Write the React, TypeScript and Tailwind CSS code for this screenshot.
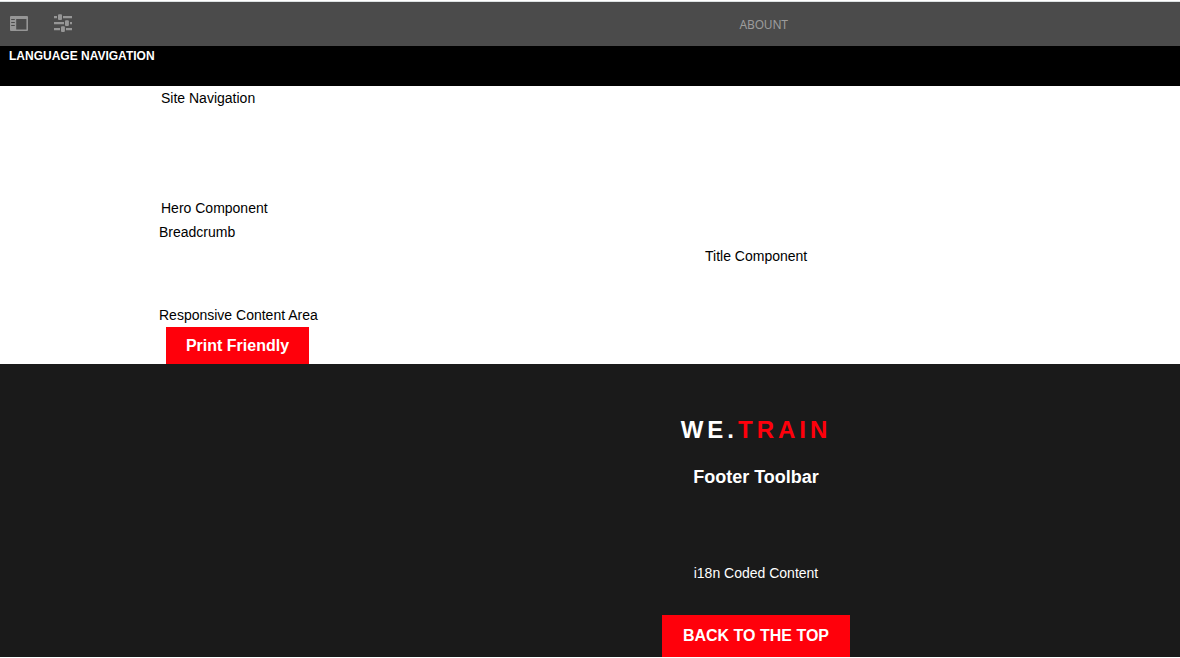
function SidePanelIcon() {
  return (
    <svg width="18" height="15" viewBox="0 0 18 15">
      <path
        fill="#969696"
        fillRule="evenodd"
        d="M1 0h16a1 1 0 0 1 1 1v13a1 1 0 0 1-1 1H1a1 1 0 0 1-1-1V1a1 1 0 0 1 1-1zM6.2 3v10.4h10.2V3z"
      />
      <path fill="#4b4b4b" d="M1.2 3h3.6v1H1.2zM1.2 6h3.6v1H1.2zM1.2 9h3.6v1H1.2z" />
    </svg>
  );
}

function SlidersIcon() {
  return (
    <svg width="18" height="18" viewBox="0 0 18 18" fill="#969696">
      <path d="M0 2.1h3v2.1H0zM9 2.1h9v2.1H9zM0 8.1h10v2.1H0zM16 8.1h2v2.1h-2zM0 14.1h6v2.1H0zM12 14.1h6v2.1h-6z" />
      <rect x="4" y="0.2" width="4" height="5.8" rx="1" />
      <rect x="11" y="6.2" width="3.9" height="5.8" rx="1" />
      <rect x="7" y="12.2" width="3.9" height="5.8" rx="1" />
    </svg>
  );
}

export default function App() {
  return (
    <div className="h-[658px] w-full overflow-hidden bg-white font-['Liberation_Sans',Arial,sans-serif] text-sm leading-6 text-black">
      <div className="flex w-[1512px] flex-col pt-px">
        <header className="flex h-[45px] border-t border-[#dce1e2] bg-[#4b4b4b]">
          <div className="w-[54px] pt-[14px] pl-[10px]">
            <SidePanelIcon />
          </div>
          <div className="w-[685px] pt-3">
            <SlidersIcon />
          </div>
          <span className="pt-[15px] pl-[0.6px] text-xs tracking-[-0.2px] text-[#9c9c9c] [font-family:'Noto_Sans',sans-serif]">
            ABOUNT
          </span>
        </header>
        <div className="h-10 bg-black pl-[9px] text-xs leading-5 font-bold text-white">
          LANGUAGE NAVIGATION
        </div>
        <main className="flex h-[278px] flex-col pl-[159px]">
          <div className="h-[110px] pl-0.5">Site Navigation</div>
          <div className="pl-0.5">Hero Component</div>
          <div>Breadcrumb</div>
          <div className="h-[59px] pl-[546px]">Title Component</div>
          <div>Responsive Content Area</div>
          <button className="ml-[7px] h-[37px] w-[143px] bg-[#ff000b] text-base font-bold text-white">
            Print Friendly
          </button>
        </main>
        <footer className="flex h-[293px] flex-col items-center bg-[#1a1a1a] text-white">
          <div className="mt-12 h-9 text-2xl leading-9 font-bold tracking-[4px]">
            WE.<span className="text-[#ff000b]">TRAIN</span>
          </div>
          <h2 className="mt-4 h-[97px] text-lg leading-[26px] font-bold">Footer Toolbar</h2>
          <div className="h-[54px]">i18n Coded Content</div>
          <button className="h-[42px] w-[188px] bg-[#ff000b] text-base font-bold">
            BACK TO THE TOP
          </button>
        </footer>
      </div>
    </div>
  );
}
